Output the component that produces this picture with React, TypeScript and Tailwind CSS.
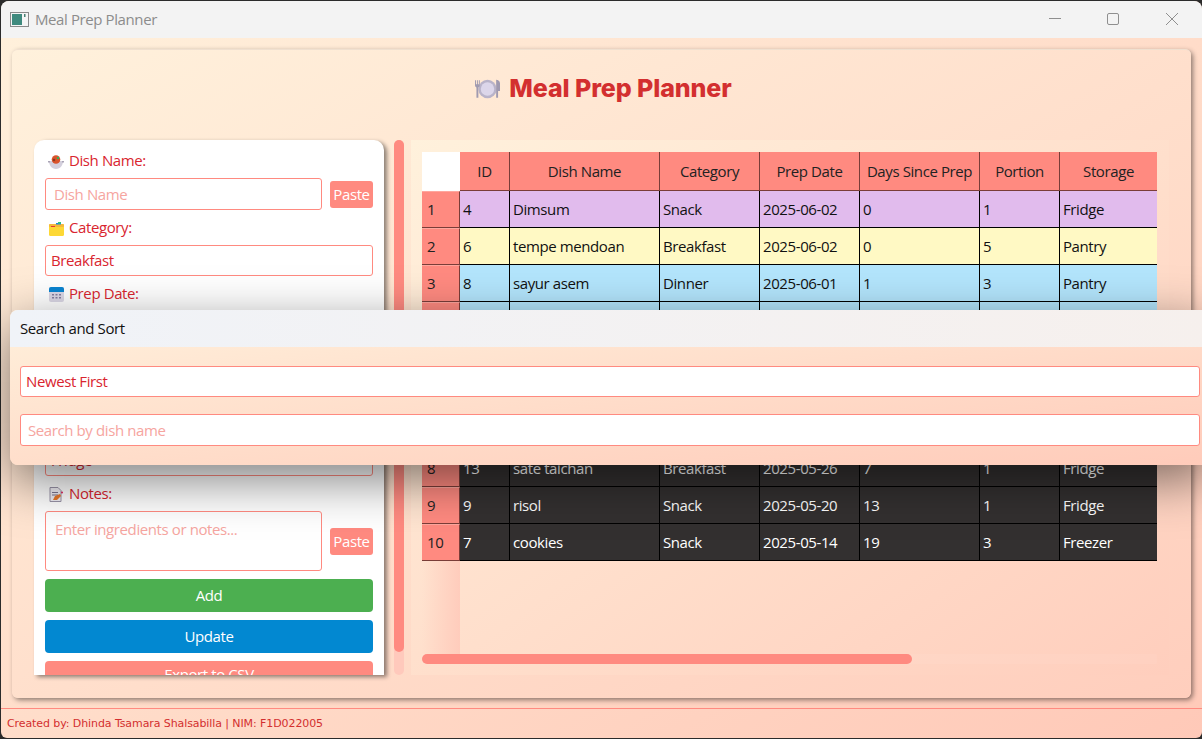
import React from "react";

type Row = {
    n: number;
    id?: string;
    dish?: string;
    category?: string;
    date?: string;
    days?: string;
    portion?: string;
    storage?: string;
    tone: string;
};

const headers = ["ID", "Dish Name", "Category", "Prep Date", "Days Since Prep", "Portion", "Storage"];

const rows: Row[] = [
    { n: 1, id: "4", dish: "Dimsum", category: "Snack", date: "2025-06-02", days: "0", portion: "1", storage: "Fridge", tone: "bg-[#e1bbed] text-[#111]" },
    { n: 2, id: "6", dish: "tempe mendoan", category: "Breakfast", date: "2025-06-02", days: "0", portion: "5", storage: "Pantry", tone: "bg-[#fff9c4] text-[#111]" },
    { n: 3, id: "8", dish: "sayur asem", category: "Dinner", date: "2025-06-01", days: "1", portion: "3", storage: "Pantry", tone: "bg-[#b3e5fc] text-[#111]" },
    { n: 4, tone: "bg-[#b3e5fc] text-[#111]" },
    { n: 5, tone: "bg-[#333030] text-white" },
    { n: 6, tone: "bg-[#333030] text-white" },
    { n: 7, tone: "bg-[#333030] text-white" },
    { n: 8, id: "13", dish: "sate taichan", category: "Breakfast", date: "2025-05-26", days: "7", portion: "1", storage: "Fridge", tone: "bg-[#333030] text-white" },
    { n: 9, id: "9", dish: "risol", category: "Snack", date: "2025-05-20", days: "13", portion: "1", storage: "Fridge", tone: "bg-[#333030] text-white" },
    { n: 10, id: "7", dish: "cookies", category: "Snack", date: "2025-05-14", days: "19", portion: "3", storage: "Freezer", tone: "bg-[#333030] text-white" },
];

const gridCols = "grid grid-cols-[38px_50px_150px_100px_100px_120px_80px_97px]";

const BowlIcon = () => (
    <svg width="16" height="14" viewBox="0 0 16 14">
        <path d="M1 6h14c0 4-2.500 8-7 8s-7-4-7-8z" fill="#d3cfdc" />
        <circle cx="8" cy="4.500" r="4.300" fill="#d9532c" />
        <circle cx="10" cy="3" r="1.200" fill="#35b05a" />
        <circle cx="6" cy="5" r="1.300" fill="#8a3a1c" />
        <rect x="0" y="6" width="2" height="1.500" fill="#a9a4b5" />
        <rect x="14" y="6" width="2" height="1.500" fill="#a9a4b5" />
    </svg>
);

const FolderIcon = () => (
    <svg width="15" height="14" viewBox="0 0 15 14">
        <rect x="0" y="2" width="15" height="12" rx="1.500" fill="#fdd835" />
        <rect x="0" y="2" width="15" height="3" rx="1" fill="#f4b93a" />
        <rect x="7" y="1" width="5" height="1.500" fill="#1e88e5" />
        <rect x="9" y="0" width="3" height="1.500" fill="#2ecc71" />
        <rect x="2" y="4" width="4" height="1" fill="#e53935" />
    </svg>
);

const CalendarIcon = () => (
    <svg width="15" height="15" viewBox="0 0 15 15">
        <rect x="0" y="0" width="15" height="15" rx="2" fill="#dcd8e6" />
        <path d="M0 5V2a2 2 0 0 1 2-2h11a2 2 0 0 1 2 2v3z" fill="#0a84d0" />
        <g fill="#857fa0">
            <rect x="3" y="7" width="2" height="1.500" /><rect x="6.500" y="7" width="2" height="1.500" /><rect x="10" y="7" width="2" height="1.500" />
            <rect x="3" y="10" width="2" height="1.500" /><rect x="6.500" y="10" width="2" height="1.500" /><rect x="10" y="10" width="2" height="1.500" />
        </g>
    </svg>
);

const NotesIcon = () => (
    <svg width="14" height="15" viewBox="0 0 14 15">
        <path d="M1 .5h8l3 3v11H1z" fill="#f1eff5" stroke="#9a94a8" />
        <rect x="3" y="5" width="6" height="1" fill="#7b7590" />
        <rect x="3" y="7.500" width="6" height="1" fill="#7b7590" />
        <path d="M4 13l2-4 5-2 1 2-4 4z" fill="#e8782a" />
        <circle cx="13" cy="5.500" r="1" fill="#e0245e" />
    </svg>
);

const PlateIcon = () => (
    <svg width="25" height="20" viewBox="0 0 26 20">
        <circle cx="13" cy="10" r="9.500" fill="#b9b3c9" />
        <circle cx="13" cy="10" r="7" fill="#dcd6ea" />
        <path d="M0 1v5c0 1.500 1 2 1.500 2.500V19h2V8.500C4 8 5 7.500 5 6V1H4v4H3V1H2v4H1V1z" fill="#a09ab0" />
        <path d="M22 19h2v-7h2V4c0-2-2-3.500-4-3.500z" fill="#a09ab0" />
    </svg>
);

const FieldLabel = ({ icon, text }: { icon: React.ReactNode; text: string }) => (
    <div className="flex items-center h-[19px] pl-[3px] pb-[2px] text-[15px] text-[#d9252f]">
        <span className="w-[16px] flex justify-center mr-[5px] pt-[2px]">{icon}</span>
        {text}
    </div>
);

const PasteButton = () => (
    <button className="w-[43px] h-[27px] rounded-[3px] bg-[#ff8a80] text-white text-[15px] shrink-0">Paste</button>
);

const App: React.FC = () => {
    return (
        <div className="relative w-[1202px] h-[739px] overflow-hidden bg-[#2b2b2b] font-['Open_Sans','Liberation_Sans',sans-serif] tracking-[-0.4px]">
            <div className="ml-px mt-px h-[737px] rounded-t-[8px] rounded-b-[6px] overflow-hidden flex flex-col bg-gradient-to-br from-[#fff1dc] to-[#ffc9b8]">
                {/* Title bar */}
                <div className="h-[37px] shrink-0 flex items-center bg-[#f3f3f3]">
                    <svg width="19" height="15" viewBox="0 0 19 15" className="ml-[9px] mr-[6px]">
                        <rect x="0.500" y="0.500" width="18" height="14" fill="#f5f5f5" stroke="#8a8a8a" />
                        <rect x="2" y="2" width="10" height="11" fill="#3f8a7e" />
                        <rect x="14" y="2" width="1.500" height="3" fill="#4a7f72" />
                    </svg>
                    <span className="text-[15px] text-[#8c8c8c]">Meal Prep Planner</span>
                    <div className="ml-auto mr-[11px] flex items-center">
                        <svg width="60" height="16" viewBox="0 0 60 16"><path d="M2 6.500h12" stroke="#8f8f8f" /></svg>
                        <svg width="58" height="16" viewBox="0 0 58 16"><rect x="0.500" y="1.500" width="11" height="11" rx="1.500" fill="none" stroke="#8f8f8f" /></svg>
                        <svg width="26" height="16" viewBox="0 0 26 16"><path d="M1 1l12 12M13 1L1 13" stroke="#8f8f8f" /></svg>
                    </div>
                </div>

                {/* Main card */}
                <div className="flex-1 min-h-0 flex flex-col pt-[11px] px-[11px] pb-[10px]">
                    <div className="flex-1 min-h-0 rounded-[6px] border-t border-[#f0e0d0] bg-gradient-to-br from-[#fff1dc] to-[#ffcebd] shadow-[2px_2px_5px_rgba(0,0,0,0.45)] flex flex-col">
                        <h1 className="h-[90px] shrink-0 flex items-center justify-center gap-[9px] pb-[12px] pl-[4px] font-['Inter',sans-serif] text-[25px] font-extrabold tracking-[-0.1px] text-[#d32f2f]">
                            <PlateIcon />
                            Meal Prep Planner
                        </h1>

                        <div className="h-[535px] flex pl-[22px]">
                            {/* Form panel */}
                            <div className="w-[350px] h-[535px] overflow-hidden rounded-t-[10px] bg-white shadow-[3px_2px_4px_rgba(0,0,0,0.45)] px-[11px] pt-[12px] shrink-0">
                                <FieldLabel icon={<BowlIcon />} text="Dish Name:" />
                                <div className="flex items-center gap-[8px] mt-[7px]">
                                    <div className="w-[277px] h-[32px] border border-[#ff8a80] rounded-[3px] px-[8px] flex items-center text-[15px] text-[#f6a5a0]">Dish Name</div>
                                    <PasteButton />
                                </div>
                                <div className="mt-[9px]"><FieldLabel icon={<FolderIcon />} text="Category:" /></div>
                                <div className="mt-[7px] h-[31px] border border-[#ff8a80] rounded-[3px] px-[5px] flex items-center text-[15px] text-[#d9252f]">Breakfast</div>
                                <div className="mt-[9px]"><FieldLabel icon={<CalendarIcon />} text="Prep Date:" /></div>
                                <div className="h-[141px]" />
                                <div className="h-[31px] border border-[#ff8a80] rounded-[3px] px-[5px] flex items-center text-[15px] text-[#d9252f]">Fridge</div>
                                <div className="mt-[9px]"><FieldLabel icon={<NotesIcon />} text="Notes:" /></div>
                                <div className="flex items-center gap-[8px] mt-[7px]">
                                    <div className="w-[277px] h-[60px] border border-[#ff8a80] rounded-[3px] px-[9px] pt-[6px] text-[15px] text-[#f6a5a0]">Enter ingredients or notes...</div>
                                    <PasteButton />
                                </div>
                                <button className="mt-[8px] w-full h-[33px] rounded-[4px] bg-[#4caf50] text-white text-[15px]">Add</button>
                                <button className="mt-[8px] w-full h-[33px] rounded-[4px] bg-[#0288d1] text-white text-[15px]">Update</button>
                                <button className="mt-[8px] w-full h-[27px] rounded-t-[4px] bg-[#ff8a80] text-white text-[15px]">Export to CSV</button>
                            </div>

                            {/* Panel scrollbar */}
                            <div className="w-[10px] ml-[10px] h-[535px] rounded-[5px] bg-[#ffc9bc] shrink-0">
                                <div className="h-[512px] rounded-[5px] bg-[#ff8a80]" />
                            </div>

                            {/* Table area */}
                            <div className="ml-[7px] w-[758px] h-[535px] bg-gradient-to-br from-[#fff1dc] to-[#ffcebd] pl-[11px] pt-[12px] flex flex-col">
                                <div className="h-[502px] w-[735px] flex flex-col">
                                    <div className={`${gridCols} h-[39px] text-[15px] text-[#222]`}>
                                        <div className="bg-white" />
                                        {headers.map((h) => (
                                            <div key={h} className="bg-[#ff8a80] border-r border-b border-[#7a3d38] last:border-r-0 flex items-center justify-center whitespace-nowrap">{h}</div>
                                        ))}
                                    </div>
                                    {rows.map((r) => (
                                        <div key={r.n} className={`${gridCols} h-[37px] text-[15px]`}>
                                            <div className="bg-[#ff8a80] border-t border-t-[#ffa79e] border-b border-r border-b-[#7a3d38] border-r-[#7a3d38] pl-[5px] flex items-center text-[#222]">{r.n}</div>
                                            {[r.id, r.dish, r.category, r.date, r.days, r.portion, r.storage].map((v, i) => (
                                                <div key={i} className={`${r.tone} border-b ${i < 6 ? "border-r" : ""} border-black pl-[3px] flex items-center whitespace-nowrap`}>{v}</div>
                                            ))}
                                        </div>
                                    ))}
                                    {/* Empty row header strip below the last row */}
                                    <div className="w-[38px] flex-1 bg-gradient-to-r from-transparent to-[#ffccbc]" />
                                </div>
                                {/* Horizontal scrollbar */}
                                <div className="w-[735px] h-[10px] rounded-[2px] bg-white/5">
                                    <div className="w-[490px] h-[10px] rounded-[5px] bg-[#ff8a80]" />
                                </div>
                            </div>
                        </div>
                    </div>
                </div>

                {/* Footer */}
                <div className="h-[30px] shrink-0 border-t border-[#ff8a80] flex items-center pl-[6px] pt-[2px] font-['DejaVu_Sans',sans-serif] text-[11px] tracking-[-0.09px] text-[#d32f2f]">
                    Created by: Dhinda Tsamara Shalsabilla | NIM: F1D022005
                </div>
            </div>

            {/* Search and Sort dialog */}
            <div className="absolute left-[10px] top-[310px] w-[1200px] h-[155px] rounded-l-[8px] overflow-hidden shadow-[0_15px_50px_rgba(0,0,0,0.5)] bg-gradient-to-br from-[#fff1dc] to-[#ffcbba]">
                <div className="h-[37px] bg-gradient-to-r from-[#f0f3f8] to-[#f6f0ed] flex items-center pl-[10px] text-[15px] text-[#111]">Search and Sort</div>
                <div className="mt-[19px] ml-[10px] w-[1180px] h-[31px] bg-white border border-[#ff8a80] rounded-[3px] px-[5px] flex items-center text-[15px] text-[#d9252f]">Newest First</div>
                <div className="mt-[17px] ml-[10px] w-[1180px] h-[32px] bg-white border border-[#ff8a80] rounded-[3px] px-[7px] flex items-center text-[15px] text-[#f6a5a0]">Search by dish name</div>
            </div>
        </div>
    );
};

export default App;
